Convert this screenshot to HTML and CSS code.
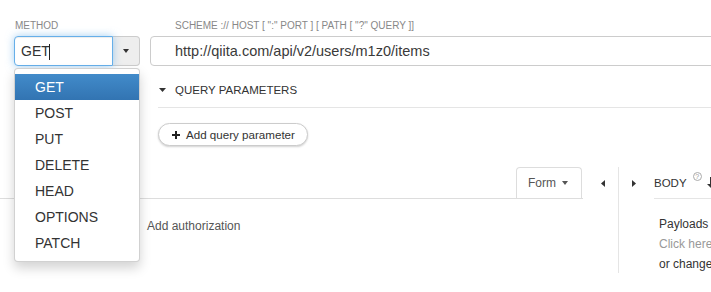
FILE: index.html
```html
<!DOCTYPE html>
<html>
<head>
<meta charset="utf-8">
<link rel="stylesheet" href="styles.css">
</head>
<body>
<div class="request-row">
  <div class="method-col">
    <span class="field-label">METHOD</span>
    <div class="input-group">
      <div class="method-input">GET<span class="cursor"></span></div>
      <div class="addon"><span class="caret"></span></div>
    </div>
    <ul class="dropdown-menu">
      <li class="active">GET</li>
      <li>POST</li>
      <li>PUT</li>
      <li>DELETE</li>
      <li>HEAD</li>
      <li>OPTIONS</li>
      <li>PATCH</li>
    </ul>
  </div>
  <div class="url-col">
    <span class="field-label url-label">SCHEME :// HOST [ ":" PORT ] [ PATH [ "?" QUERY ]]</span>
    <div class="url-input">http://qiita.com/api/v2/users/m1z0/items</div>
    <div class="query-section">
      <div class="section-head">
        <svg class="tri-down" width="7" height="4" viewBox="0 0 7 4"><path d="M0 0H7L3.5 4Z" fill="#333"/></svg>
        <span>QUERY PARAMETERS</span>
      </div>
      <button class="pill-btn">
        <svg width="8" height="8" viewBox="0 0 8 8"><path d="M4 0V8M0 4H8" stroke="#222" stroke-width="2"/></svg>
        <span>Add query parameter</span>
      </button>
    </div>
  </div>
</div>
<div class="panes">
  <div class="left-pane">
    <div class="pane-head">
      <div class="tabs">
        <div class="tab"><span>Form</span><span class="caret caret-sm"></span></div>
      </div>
      <div class="arrow-cell">
        <svg width="4" height="7" viewBox="0 0 4 7"><path d="M4 0V7L0 3.5Z" fill="#333"/></svg>
      </div>
    </div>
    <div class="auth-row">
      <span class="help">?</span>
      <span>Add authorization</span>
    </div>
  </div>
  <div class="right-pane">
    <div class="pane-head">
      <div class="arrow-cell arrow-right">
        <svg width="4" height="7" viewBox="0 0 4 7"><path d="M0 0V7L4 3.5Z" fill="#333"/></svg>
      </div>
      <div class="body-head">
        <span>BODY</span>
        <span class="help help-sup">?</span>
        <svg class="dl" width="8" height="12" viewBox="0 0 8 12"><path d="M3 0H5V7H8L4 11L0 7H3Z" fill="#333"/></svg>
      </div>
    </div>
    <div class="body-content">
      <div>Payloads</div>
      <div class="muted">Click here</div>
      <div>or change</div>
    </div>
  </div>
</div>
</body>
</html>
```
FILE: styles.css
```css
html, body {
  margin: 0;
  padding: 0;
  overflow: hidden;
  background: #fff;
}
body {
  width: 711px;
  height: 292px;
  font-family: "Liberation Sans", Arial, sans-serif;
  color: #333;
}
.request-row {
  display: flex;
  gap: 10px;
  padding: 20px 0 0 14px;
  width: 800px;
}
.method-col {
  position: relative;
  width: 126px;
  flex: none;
}
.field-label {
  display: block;
  font-size: 10px;
  line-height: 12px;
  color: #888;
  margin-bottom: 4px;
  padding-left: 1px;
  white-space: nowrap;
}
.url-label {
  padding-left: 25px;
}
.input-group {
  display: flex;
  height: 30px;
}
.method-input {
  box-sizing: border-box;
  width: 99px;
  height: 30px;
  border: 1px solid #66afe9;
  border-radius: 4px 0 0 4px;
  box-shadow: inset 0 1px 1px rgba(0,0,0,.075), 0 0 8px rgba(102,175,233,.6);
  padding: 1px 6px 0;
  font-size: 14px;
  line-height: 27px;
  display: flex;
  align-items: center;
  position: relative;
  z-index: 1;
  background: #fff;
}
.cursor {
  display: inline-block;
  width: 1px;
  height: 16px;
  background: #222;
  margin-left: -1px;
}
.addon {
  box-sizing: border-box;
  width: 27px;
  border: 1px solid #ccc;
  border-left: 0;
  border-radius: 0 4px 4px 0;
  background: #eee;
  display: flex;
  align-items: center;
  justify-content: center;
}
.caret {
  display: inline-block;
  width: 0;
  height: 0;
  border-top: 4px solid #333;
  border-left: 3.5px solid transparent;
  border-right: 3.5px solid transparent;
}
.caret-sm {
  border-top-color: #555;
}
.dropdown-menu {
  position: absolute;
  top: 48px;
  left: 0;
  width: 126px;
  box-sizing: border-box;
  margin: 0;
  padding: 5px 0;
  list-style: none;
  background: #fff;
  border: 1px solid rgba(0,0,0,.18);
  border-radius: 4px;
  box-shadow: 0 6px 12px rgba(0,0,0,.175);
  z-index: 10;
  font-size: 14px;
}
.dropdown-menu li {
  padding: 3px 20px;
  line-height: 20px;
  color: #333;
}
.dropdown-menu li.active {
  background-image: linear-gradient(#428bca, #3274b2);
  color: #fff;
}
.url-col {
  width: 600px;
  flex: none;
}
.url-input {
  box-sizing: border-box;
  height: 30px;
  border: 1px solid #ccc;
  border-radius: 4px;
  padding: 0 0 0 24px;
  font-size: 14.5px;
  line-height: 28px;
  color: #3a3a3a;
  white-space: nowrap;
}
.query-section {
  padding-left: 8px;
  display: flex;
  flex-direction: column;
  align-items: flex-start;
}
.section-head {
  box-sizing: border-box;
  align-self: stretch;
  height: 42px;
  padding-top: 7px;
  display: flex;
  align-items: center;
  border-bottom: 1px solid #e5e5e5;
  font-size: 11.5px;
  color: #333;
}
.tri-down {
  margin: 0 9px 0 1px;
}
.pill-btn {
  margin-top: 15px;
  height: 23px;
  box-sizing: border-box;
  border: 1px solid #ccc;
  border-radius: 12px;
  background: #fff;
  box-shadow: 0 1px 2px rgba(0,0,0,.18);
  padding: 0 12px 0 13px;
  font-family: "Liberation Sans", Arial, sans-serif;
  font-size: 11.6px;
  color: #333;
  display: flex;
  align-items: center;
  gap: 6px;
}
.panes {
  display: flex;
  margin-top: 21px;
  height: 106px;
  width: 820px;
}
.left-pane {
  width: 618px;
  flex: none;
}
.pane-head {
  display: flex;
  height: 32px;
}
.tabs {
  flex: 1;
  display: flex;
  justify-content: flex-end;
  align-items: flex-end;
  border-bottom: 1px solid #ddd;
}
.tab {
  box-sizing: border-box;
  height: 31px;
  width: 66px;
  margin-right: 1px;
  border: 1px solid #ddd;
  border-bottom: 0;
  border-radius: 4px 4px 0 0;
  padding-left: 11px;
  display: flex;
  align-items: center;
  gap: 6px;
  font-size: 12px;
  color: #555;
}
.arrow-cell {
  box-sizing: border-box;
  width: 35px;
  flex: none;
  display: flex;
  align-items: center;
  padding-left: 18px;
}
.arrow-right {
  padding-left: 13px;
}
.auth-row {
  padding: 17px 0 0 131px;
  display: flex;
  align-items: center;
  gap: 7px;
  font-size: 12px;
  line-height: 20px;
  color: #555;
}
.help {
  box-sizing: border-box;
  width: 9px;
  height: 9px;
  border: 1px solid #aaa;
  border-radius: 50%;
  font-size: 7px;
  line-height: 7px;
  text-align: center;
  color: #999;
  flex: none;
}
.auth-row .help {
  margin-top: -6px;
}
.right-pane {
  flex: none;
  width: 200px;
  border-left: 1px solid #e5e5e5;
}
.body-head {
  flex: 1;
  display: flex;
  align-items: center;
  border-bottom: 1px solid #e5e5e5;
  font-size: 11.5px;
  color: #333;
}
.help-sup {
  margin: -12px 0 0 6px;
}
.dl {
  margin-left: 5px;
}
.body-content {
  padding: 15px 0 0 40px;
  font-size: 12px;
  line-height: 20px;
  color: #333;
  white-space: nowrap;
}
.muted {
  color: #999;
}
```
